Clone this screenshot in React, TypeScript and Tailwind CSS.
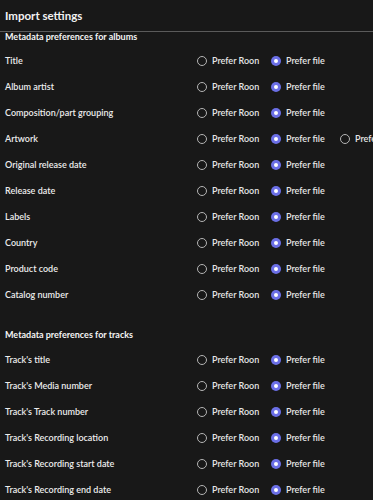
import React from "react";

const albumFields = [
  "Title",
  "Album artist",
  "Composition/part grouping",
  "Artwork",
  "Original release date",
  "Release date",
  "Labels",
  "Country",
  "Product code",
  "Catalog number",
];

const trackFields = [
  "Track's title",
  "Track's Media number",
  "Track's Track number",
  "Track's Recording location",
  "Track's Recording start date",
  "Track's Recording end date",
];

function Radio({ checked, label, width }: { checked?: boolean; label: string; width: string }) {
  return (
    <div className={`flex items-center gap-[5px] shrink-0 ${width}`}>
      {checked ? (
        <span className="w-[10px] h-[10px] shrink-0 rounded-full bg-[#6b6fe6] flex items-center justify-center">
          <span className="w-[4px] h-[4px] rounded-full bg-white" />
        </span>
      ) : (
        <span className="w-[10px] h-[10px] shrink-0 rounded-full border-[1.5px] border-[#b5b5b5]" />
      )}
      <span className="text-[9px] font-semibold text-[#e6e6e6] whitespace-nowrap">{label}</span>
    </div>
  );
}

function Row({ label, extra }: { label: string; extra?: boolean }) {
  return (
    <div className="flex items-center h-[26px]">
      <div className="w-[192px] shrink-0 text-[9px] font-semibold text-[#ececec]">{label}</div>
      <Radio label="Prefer Roon" width="w-[74px]" />
      <Radio checked label="Prefer file" width="w-[69px]" />
      {extra && <Radio label="Prefer Roon" width="w-[74px]" />}
    </div>
  );
}

export default function App() {
  return (
    <div
      className="w-[373px] h-[500px] overflow-hidden bg-[#181818] text-white"
      style={{ fontFamily: "Lato, 'Open Sans', sans-serif" }}
    >
      <div className="h-[32px] border-b border-[#5a5a5a] flex items-center px-[5px]">
        <h1 className="text-[11.5px] font-bold text-[#f2f2f2]">Import settings</h1>
      </div>
      <div className="pl-[5px]">
        <h2 className="text-[9px] font-bold leading-[8px] pt-[1px] text-[#f4f4f4]">
          Metadata preferences for albums
        </h2>
        <div className="pt-[7px]">
          {albumFields.map((f) => (
            <Row key={f} label={f} extra={f === "Artwork"} />
          ))}
        </div>
        <h2 className="text-[9px] font-bold leading-[8px] mt-[23px] text-[#f4f4f4]">
          Metadata preferences for tracks
        </h2>
        <div className="pt-[8px]">
          {trackFields.map((f) => (
            <Row key={f} label={f} />
          ))}
        </div>
      </div>
    </div>
  );
}
